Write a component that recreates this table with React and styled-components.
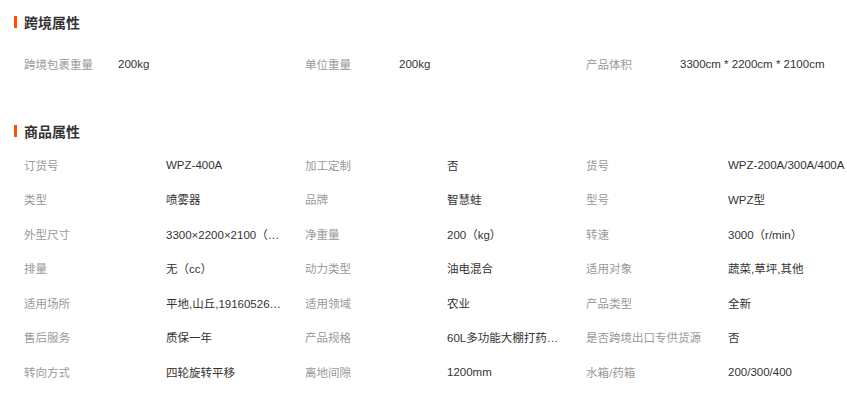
import React from 'react';
import styled, { createGlobalStyle } from 'styled-components';

const crossBorder = [
    { label: '跨境包裹重量', value: '200kg' },
    { label: '单位重量', value: '200kg' },
    { label: '产品体积', value: '3300cm * 2200cm * 2100cm' },
];

const goods = [
    { label: '订货号', value: 'WPZ-400A' },
    { label: '加工定制', value: '否' },
    { label: '货号', value: 'WPZ-200A/300A/400A' },
    { label: '类型', value: '喷雾器' },
    { label: '品牌', value: '智慧蛙' },
    { label: '型号', value: 'WPZ型' },
    { label: '外型尺寸', value: '3300×2200×2100（mm）' },
    { label: '净重量', value: '200（kg）' },
    { label: '转速', value: '3000（r/min）' },
    { label: '排量', value: '无（cc）' },
    { label: '动力类型', value: '油电混合' },
    { label: '适用对象', value: '蔬菜,草坪,其他' },
    { label: '适用场所', value: '平地,山丘,19160526068' },
    { label: '适用领域', value: '农业' },
    { label: '产品类型', value: '全新' },
    { label: '售后服务', value: '质保一年' },
    { label: '产品规格', value: '60L多功能大棚打药机喷雾器' },
    { label: '是否跨境出口专供货源', value: '否' },
    { label: '转向方式', value: '四轮旋转平移' },
    { label: '离地间隙', value: '1200mm' },
    { label: '水箱/药箱', value: '200/300/400' },
];

function AttrGrid({ items, labelWidth, valueWidth, rowHeight }) {
    return (
        <Grid>
            {items.map((item, i) => (
                <Cell key={item.label} rowHeight={rowHeight}>
                    <Label width={labelWidth}>{item.label}</Label>
                    <Value width={i % 3 === 2 ? 0 : valueWidth}>{item.value}</Value>
                </Cell>
            ))}
        </Grid>
    );
}

export default function App() {
    return (
        <Page>
            <GlobalStyle />
            <Section>
                <Title>跨境属性</Title>
                <Rows top={15}>
                    <AttrGrid items={crossBorder} labelWidth={94} rowHeight={34} />
                </Rows>
            </Section>
            <Section top={40}>
                <Title>商品属性</Title>
                <Rows top={6.5}>
                    <AttrGrid items={goods} labelWidth={142} valueWidth={118} rowHeight={34.5} />
                </Rows>
            </Section>
        </Page>
    );
}

const GlobalStyle = createGlobalStyle`
    body {
        margin: 0;
        background: #fff;
        font-family: "Liberation Sans", "Noto Sans CJK SC", sans-serif;
    }
`;

const Page = styled.div`
    width: 847px;
    padding-top: 12px;
    background: #fff;
`;

const Section = styled.section`
    margin-top: ${(props) => props.top || 0}px;
`;

const Title = styled.h3`
    display: flex;
    align-items: center;
    gap: 7px;
    margin: 0 0 0 14px;
    height: 20px;
    font-size: 14px;
    font-weight: bold;
    color: #333;

    &:before {
        display: block;
        width: 3px;
        height: 12px;
        background: #ff5000;
        content: '';
    }
`;

const Rows = styled.div`
    padding: ${(props) => props.top}px 0 0 24px;
`;

const Grid = styled.div`
    display: grid;
    grid-template-columns: 281px 281px 1fr;
`;

const Cell = styled.div`
    display: flex;
    align-items: center;
    height: ${(props) => props.rowHeight}px;
    font-size: 11.5px;
    white-space: nowrap;
`;

const Label = styled.div`
    flex: 0 0 ${(props) => props.width}px;
    color: #999;
`;

const Value = styled.div`
    color: #333;
    ${(props) => props.width > 0 && `
        max-width: ${props.width}px;
        overflow: hidden;
        text-overflow: ellipsis;
    `}
`;
